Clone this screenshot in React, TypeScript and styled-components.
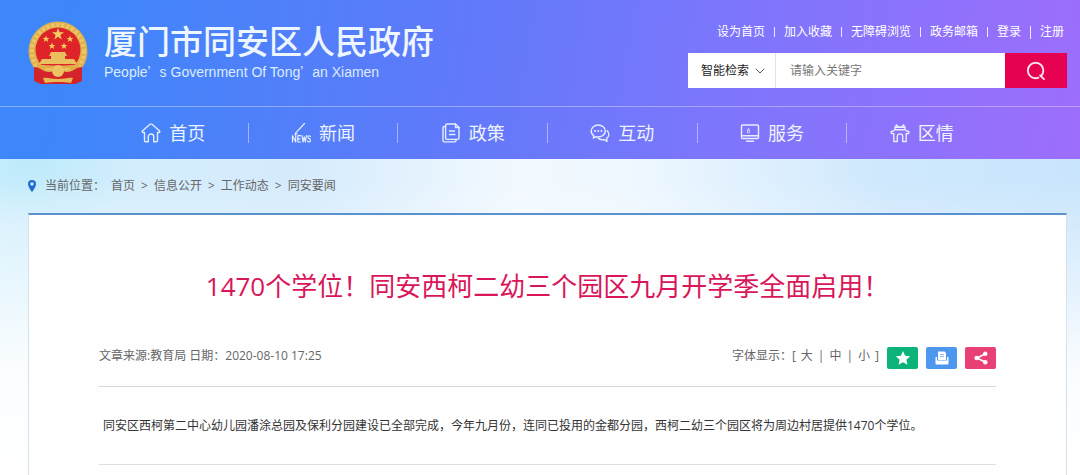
import React from 'react';
import styled, { createGlobalStyle } from 'styled-components';

const GlobalStyle = createGlobalStyle`
  * { box-sizing: border-box; }
  body {
    margin: 0;
    background: #fff;
    color: #666;
    font-family: "Open Sans", "Noto Sans CJK SC", sans-serif;
    font-size: 12px;
    line-height: 20px;
  }
  a { color: inherit; text-decoration: none; }
  h1, p, ol { margin: 0; padding: 0; }
  svg { display: block; }
`;

const Page = styled.div`
  min-height: 100vh;
  display: flex;
  flex-direction: column;
  background:
    linear-gradient(180deg, rgba(255, 255, 255, 0) 180px, rgba(255, 255, 255, 0.9) 370px, #fff 470px),
    radial-gradient(ellipse 110px 60px at 30px 165px, rgba(180, 232, 250, 0.7), rgba(180, 232, 250, 0)),
    linear-gradient(90deg, #d3effd 0%, #d5ebfc 28%, #f2f9ff 48%, #eff8ff 58%, #cfe8fd 82%, #c9e5fc 100%);
`;

const Header = styled.header`
  background: linear-gradient(100deg, #3d87fa 6%, #5d7afa 40%, #7c76fc 66%, #9d6efb 100%);
  color: #fff;
`;

const Masthead = styled.div`
  height: 107px;
  display: flex;
  justify-content: space-between;
  padding: 20px 13px 0 28px;
  border-bottom: 1px solid rgba(255, 255, 255, 0.35);
`;

const Brand = styled.a`
  display: flex;
  align-items: flex-start;
  gap: 16px;
`;

const BrandText = styled.div`
  display: flex;
  flex-direction: column;
  gap: 2px;
  padding-top: 2px;
`;

const SiteName = styled.span`
  font-size: 33px;
  line-height: 40px;
  font-weight: 500;
  color: #eef6ff;
`;

const SiteNameEnglish = styled.span`
  font-family: "Liberation Sans", sans-serif;
  font-size: 14px;
  line-height: 16px;
  color: #dcecff;
`;

const WideMark = styled.span`
  font-family: "Noto Sans CJK SC", sans-serif;
  font-size: 12px;
  line-height: 1;
`;

const Tools = styled.div`
  width: 379px;
  display: flex;
  flex-direction: column;
  padding-top: 2px;
  gap: 11px;
`;

const QuickLinks = styled.nav`
  display: flex;
  align-items: center;
  justify-content: flex-end;
  gap: 9px;
  padding-right: 3px;
`;

const Bar = styled.i<{ $tall?: boolean }>`
  width: 1px;
  height: ${(p) => (p.$tall ? 13 : 10)}px;
  background: rgba(255, 255, 255, 0.85);
`;

const Search = styled.form`
  height: 35px;
  display: flex;
  background: #fff;
`;

const ScopeBox = styled.div`
  width: 88px;
  display: grid;
  grid-template-columns: 1fr 12px;
  align-items: center;
  padding-right: 8px;
  border-right: 1px solid #e2e2ea;
`;

const Scope = styled.select`
  grid-area: 1 / 1 / 2 / 3;
  height: 35px;
  padding: 0 0 0 13px;
  border: 0;
  outline: 0;
  appearance: none;
  background: none;
  color: #222;
  font: inherit;
`;

const ScopeArrow = styled.svg`
  grid-area: 1 / 2;
  pointer-events: none;
`;

const Keyword = styled.input`
  flex: 1;
  min-width: 0;
  padding: 0 14px;
  border: 0;
  outline: 0;
  background: none;
  color: #333;
  font: inherit;
  &::placeholder { color: #777; opacity: 1; }
`;

const SearchButton = styled.button`
  width: 62px;
  display: flex;
  align-items: center;
  justify-content: center;
  border: 0;
  padding: 0;
  background: #e60050;
`;

const MainNav = styled.nav`
  height: 52px;
  display: flex;
  align-items: center;
  padding: 0 84px 0 99px;
`;

const NavItem = styled.a`
  flex: 1;
  height: 20px;
  display: flex;
  align-items: center;
  justify-content: center;
  gap: 8px;
  font-size: 18px;
  color: #eef4ff;
  & + & { border-left: 1px solid rgba(255, 255, 255, 0.45); }
`;

const Crumbs = styled.nav`
  height: 54px;
  display: flex;
  align-items: center;
  padding-left: 28px;
`;

const CrumbLabel = styled.span`
  margin: 0 6px 0 9px;
`;

const CrumbList = styled.ol`
  display: flex;
  list-style: none;
`;

const Crumb = styled.li`
  & + &::before {
    content: ">";
    margin: 0 6px;
  }
`;

const Card = styled.main`
  flex: 1;
  margin: 0 13px 0 28px;
  padding: 0 70px;
  border: 1px solid #d6e2ec;
  border-top: 2px solid #5c92cb;
  border-bottom: 0;
  background: #fefefe;
`;

const Title = styled.h1`
  padding: 51px 0 40px;
  text-align: center;
  font-size: 26px;
  line-height: 40px;
  font-weight: 400;
  color: #d9165a;
`;

const Meta = styled.div`
  height: 40px;
  display: flex;
  justify-content: space-between;
`;

const MetaEnd = styled.div`
  display: flex;
  align-items: flex-start;
  gap: 8px;
`;

const SizeGroup = styled.div`
  display: flex;
  gap: 5px;
`;

const SizeButton = styled.button`
  padding: 0;
  border: 0;
  background: none;
  color: inherit;
  font: inherit;
`;

const Actions = styled.div`
  display: flex;
  gap: 8px;
  padding-top: 1px;
`;

const Action = styled.button<{ $tone: string }>`
  width: 31px;
  height: 22px;
  display: flex;
  align-items: center;
  justify-content: center;
  padding: 0;
  border: 0;
  border-radius: 2px;
  background: ${(p) => p.$tone};
`;

const Article = styled.article`
  padding: 29px 4px 28px;
  border-top: 1px solid #d9d9d9;
  border-bottom: 1px solid #dfdfdf;
  color: #333;
`;

const Emblem = () => (
  <svg width="60" height="66" viewBox="0 0 60 66" aria-hidden="true">
    <path d="M7 45h46l1 15-7 4H13l-7-4z" fill="#d3242b" />
    <circle cx="30" cy="31" r="29.5" fill="#e0b04c" />
    <circle cx="30" cy="31" r="26" fill="none" stroke="#ecc567" strokeWidth="4" strokeDasharray="3 2" />
    <circle cx="30" cy="30" r="22.5" fill="#de2329" />
    <path d="M30 8l1.500 4.300h4.500l-3.600 2.700 1.300 4.400L30 16.800l-3.700 2.600 1.300-4.400-3.600-2.700h4.500z" fill="#f6cf63" />
    {[[18, 19], [42, 19], [24, 26], [36, 26]].map(([x, y]) => (
      <path key={x} transform={`translate(${x} ${y})`} d="M0-3.400l.9 2.300h2.500L1.400.5l.8 2.500L0 1.500-2.200 3l.8-2.500-2-1.600h2.500z" fill="#f6cf63" />
    ))}
    <path d="M23 32h14l2 4h-2v3h9l3 5H11l3-5h9v-3h-2z" fill="#eabf5e" />
    <path d="M8 44c14 2 30 2 44 0l-4 7H12z" fill="#e0ae49" />
    <path d="M6 47c6 0 9 5 15 5 4 0 5-2 9-2s5 2 9 2c6 0 9-5 15-5v14l-7 3H13l-7-3z" fill="#d3242b" />
    <circle cx="30" cy="51" r="6" fill="#edc463" />
    <path d="M18 50c3-3 6 1 12 1s9-4 12-1" fill="none" stroke="#edc463" strokeWidth="2" />
    <path d="M15 58c5-1 8 1 15 1s10-2 15-1l-2 5c-4-1-8-1-13-1s-9 0-13 1z" fill="#e8b852" />
  </svg>
);

const NavSvg = ({ children }: { children: React.ReactNode }) => (
  <svg width="20" height="20" viewBox="0 0 20 20" fill="none" stroke="#e4eeff" strokeWidth="1.400" strokeLinejoin="round" strokeLinecap="round" aria-hidden="true">
    {children}
  </svg>
);

const NAV: { label: string; icon: React.ReactNode }[] = [
  {
    label: '首页',
    icon: <path d="M3.500 9.500H2.200c-1 0-1.300-1-.6-1.700L9 1.300c.6-.5 1.400-.5 2 0l7.400 6.500c.7.700.4 1.700-.6 1.700h-1.300v8.100c0 .7-.5 1.200-1.200 1.200h-2.600v-5.200c0-3.400-5.400-3.400-5.400 0v5.200H4.700c-.7 0-1.200-.5-1.200-1.200z" />,
  },
  {
    label: '新闻',
    icon: (
      <>
        <path d="M13.500.5L4.800 9.800l-.8 1.800 2-.8" strokeWidth="1.200" />
        <path d="M1.500 19v-6.300L4.700 19v-6.300M9.500 12.700H6.800V19h2.700M6.800 15.800h2.300M11 12.700l1 6.300 1.200-5.200 1.200 5.200 1-6.300M19.500 13.500c-1-1.300-2.700-.7-2.600.6 0 1.800 2.700 1.300 2.700 3.300-.1 1.700-2 2-3 .7" strokeWidth="1.200" />
      </>
    ),
  },
  {
    label: '政策',
    icon: (
      <>
        <path d="M6 1h8.500L18 4.500V15c0 .8-.6 1.400-1.400 1.400H6c-.8 0-1.400-.6-1.400-1.400V2.400C4.600 1.600 5.200 1 6 1z" />
        <path d="M4.600 3.500H3.200C2.400 3.500 2 4 2 4.800v12.800c0 .8.600 1.300 1.400 1.300h10.200c.8 0 1.400-.6 1.400-1.400v-1M14.500 1v3.500H18M8.500 8h5M8.500 11.500h5.500" />
      </>
    ),
  },
  {
    label: '互动',
    icon: (
      <>
        <path d="M8.200 2C4.400 2 1.200 4.600 1.200 8c0 2 1 3.700 2.600 4.700L3.300 15l2.700-1.300c4.900 1 9.300-1.700 9.300-5.700 0-3.400-3.200-6-7.100-6z" />
        <path d="M17.200 7.700c2.600 2.500 2 6-.6 7.700l.4 3-3-1.900c-2.400.6-4.500 0-6-1.400" />
        <path d="M5 8h.1M8.200 8h.1M11.400 8h.1" strokeWidth="1.900" />
      </>
    ),
  },
  {
    label: '服务',
    icon: (
      <>
        <rect x="1.500" y="2" width="17" height="13.500" rx="1" />
        <path d="M1.500 12.800h17M6.500 18.300h7" />
        <path d="M8.500 6c-2 2-1.200 4 0 4s1.500-2 0-4z" strokeWidth="1" />
      </>
    ),
  },
  {
    label: '区情',
    icon: (
      <path d="M6.500 2l2 2h3l2-2M5 4.300h10M6.500 2L5 4.300v2.500M13.500 2L15 4.300v2.500M1.300 8.500C4 8.500 4 6.800 5 6.800h10c1 0 1 1.700 3.700 1.700v2h-2.500V18.500h-3.500v-5.200c0-3.300-5.400-3.300-5.400 0v5.200H3.800v-8H1.300z" />
    ),
  },
];

const PinIcon = () => (
  <svg width="8" height="12" viewBox="0 0 8 12" aria-hidden="true">
    <path d="M4 0a4 4 0 0 0-4 4c0 3 4 8 4 8s4-5 4-8a4 4 0 0 0-4-4zm0 2.200a1.800 1.800 0 1 1 0 3.600 1.800 1.800 0 0 1 0-3.600z" fill="#2168cf" fillRule="evenodd" />
  </svg>
);

const LINKS = ['设为首页', '加入收藏', '无障碍浏览', '政务邮箱', '登录', '注册'];
const CRUMBS = ['首页', '信息公开', '工作动态', '同安要闻'];

export default function App() {
  return (
    <>
      <GlobalStyle />
      <Page>
        <Header>
          <Masthead>
            <Brand href="#">
              <Emblem />
              <BrandText>
                <SiteName>厦门市同安区人民政府</SiteName>
                <SiteNameEnglish>
                  People<WideMark>’</WideMark>s Government Of Tong<WideMark>’</WideMark>an Xiamen
                </SiteNameEnglish>
              </BrandText>
            </Brand>
            <Tools>
              <QuickLinks>
                {LINKS.map((label, i) => (
                  <React.Fragment key={label}>
                    {i > 0 && <Bar $tall={i === LINKS.length - 1} />}
                    <a href="#">{label}</a>
                  </React.Fragment>
                ))}
              </QuickLinks>
              <Search onSubmit={(e) => e.preventDefault()}>
                <ScopeBox>
                  <Scope aria-label="检索方式">
                    <option>智能检索</option>
                  </Scope>
                  <ScopeArrow width="10" height="6" viewBox="0 0 10 6" fill="none" stroke="#555">
                    <path d="M.7.7L5 5 9.300.7" />
                  </ScopeArrow>
                </ScopeBox>
                <Keyword type="text" aria-label="关键字" placeholder="请输入关键字" />
                <SearchButton type="submit" aria-label="搜索">
                  <svg width="20" height="20" viewBox="0 0 20 20" fill="none" stroke="#ffe3ee" strokeWidth="1.800" strokeLinecap="round">
                    <path d="M12.500 16.600A7.700 7.700 0 1 1 15.500 14.400M14.200 14.500L18 18.200" />
                  </svg>
                </SearchButton>
              </Search>
            </Tools>
          </Masthead>
          <MainNav>
            {NAV.map((item) => (
              <NavItem href="#" key={item.label}>
                <NavSvg>{item.icon}</NavSvg>
                {item.label}
              </NavItem>
            ))}
          </MainNav>
        </Header>

        <Crumbs>
          <PinIcon />
          <CrumbLabel>当前位置：</CrumbLabel>
          <CrumbList>
            {CRUMBS.map((label) => (
              <Crumb key={label}>
                <a href="#">{label}</a>
              </Crumb>
            ))}
          </CrumbList>
        </Crumbs>

        <Card>
          <Title>1470个学位！同安西柯二幼三个园区九月开学季全面启用！</Title>
          <Meta>
            <span>文章来源:教育局 日期：2020-08-10 17:25</span>
            <MetaEnd>
              <SizeGroup>
                <span>字体显示：[</span>
                <SizeButton type="button">大</SizeButton>|
                <SizeButton type="button">中</SizeButton>|
                <SizeButton type="button">小</SizeButton>]
              </SizeGroup>
              <Actions>
                <Action type="button" $tone="#0bb378" aria-label="收藏">
                  <svg width="16" height="16" viewBox="0 0 16 16" fill="#fff">
                    <path d="M8 1l2.100 4.700 5.100.6-3.800 3.400 1.100 5L8 12.200l-4.500 2.500 1.100-5L.8 6.300l5.100-.6z" />
                  </svg>
                </Action>
                <Action type="button" $tone="#4f97ee" aria-label="打印">
                  <svg width="14" height="14" viewBox="0 0 14 14" fill="#fff">
                    <path d="M.5 6H2v3.500h10V6h1.500v6.500a1 1 0 0 1-1 1h-11a1 1 0 0 1-1-1z" />
                    <path d="M3 .5h6.500L11 2v7H3z" />
                    <path d="M5 3.500h4M5 5.500h4" stroke="#8dbcf5" />
                  </svg>
                </Action>
                <Action type="button" $tone="#e83f75" aria-label="分享">
                  <svg width="14" height="14" viewBox="0 0 14 14" fill="#fff">
                    <path d="M11 3L3 7l8 4" fill="none" stroke="#fff" strokeWidth="1.600" />
                    <circle cx="11.300" cy="2.700" r="2.200" />
                    <circle cx="2.700" cy="7" r="2.300" />
                    <circle cx="11.300" cy="11.300" r="2.200" />
                  </svg>
                </Action>
              </Actions>
            </MetaEnd>
          </Meta>
          <Article>
            <p>同安区西柯第二中心幼儿园潘涂总园及保利分园建设已全部完成，今年九月份，连同已投用的金都分园，西柯二幼三个园区将为周边村居提供1470个学位。</p>
          </Article>
        </Card>
      </Page>
    </>
  );
}
